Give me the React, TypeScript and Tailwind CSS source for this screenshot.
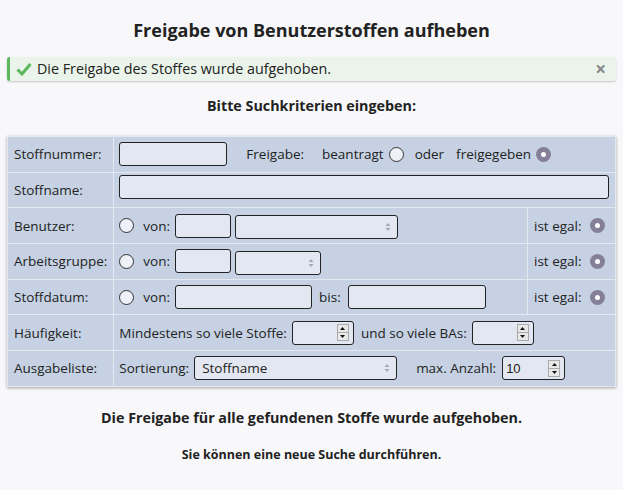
import React from "react";

function Radio({ checked }: { checked?: boolean }) {
  if (checked) {
    return (
      <span className="inline-flex h-[15px] w-[15px] items-center justify-center rounded-full bg-[#857f98]">
        <span className="h-[5px] w-[5px] rounded-full bg-white" />
      </span>
    );
  }
  return <span className="inline-block h-[15px] w-[15px] rounded-full border border-[#333] bg-[#eef1f7]" />;
}

function Box({ w, children }: { w: string; children?: React.ReactNode }) {
  return (
    <span className={`inline-flex h-[24px] items-center rounded-[3px] border border-[#222] bg-[#e3e7f1] px-[7px] ${w}`}>
      {children}
    </span>
  );
}

function SelectBox({ w, value }: { w: string; value?: string }) {
  return (
    <span className={`inline-flex h-[24px] items-center justify-between rounded-[3px] border border-[#222] bg-[#e3e7f1] pl-[7px] pr-[6px] ${w}`}>
      <span>{value}</span>
      <svg width="6" height="10" viewBox="0 0 6 10">
        <path d="M3 1 L5.5 4 H0.5 Z M3 9 L5.5 6 H0.5 Z" fill="#a3a8b3" />
      </svg>
    </span>
  );
}

function NumberBox({ w, value }: { w: string; value?: string }) {
  return (
    <span className={`inline-flex h-[24px] items-center justify-between rounded-[3px] border border-[#222] bg-[#e3e7f1] pl-[3px] pr-[4px] ${w}`}>
      <span className="text-[13px] font-['Liberation_Sans',sans-serif]">{value}</span>
      <span className="flex h-[17px] w-[12px] flex-col border border-[#aaa] bg-[#e8e8e8]">
        <span className="flex flex-1 items-center justify-center border-b border-[#aaa]">
          <svg width="5" height="3" viewBox="0 0 5 3"><path d="M2.5 0 L5 3 H0 Z" fill="#111" /></svg>
        </span>
        <span className="flex flex-1 items-center justify-center">
          <svg width="5" height="3" viewBox="0 0 5 3"><path d="M0 0 H5 L2.5 3 Z" fill="#111" /></svg>
        </span>
      </span>
    </span>
  );
}

const td = "border border-[#e4e9f1] px-[6px] h-[35.7px]";
const mid = "border border-[#e4e9f1] pl-[5px] pr-[6px] h-[35.7px]";

export default function App() {
  return (
    <div className="min-h-[490px] bg-[#f8f8fa] font-['Open_Sans',sans-serif] text-[#222] pt-[18px]">
      <h1 className="text-center text-[18px] font-bold leading-[24px]">Freigabe von Benutzerstoffen aufheben</h1>

      <div className="mx-[7px] mt-[15px] flex h-[24px] items-center rounded-[3px] border-l-[3px] border-[#5cb85c] bg-[#ebf4ea] pl-[6px] pr-[10px] shadow-[0_1px_2px_rgba(0,0,0,0.2)]">
        <svg width="16" height="14" viewBox="0 0 16 14" className="mr-[5px]">
          <path d="M1.5 7.5 L6 12 L14.5 2" stroke="#5cb85c" strokeWidth="3" fill="none" />
        </svg>
        <span className="flex-1 text-[14.3px]">Die Freigabe des Stoffes wurde aufgehoben.</span>
        <span className="text-[19px] font-bold text-[#888] leading-none">×</span>
      </div>

      <p className="mt-[15px] text-center text-[14.3px] font-bold leading-[20px]">Bitte Suchkriterien eingeben:</p>

      <div className="mx-[7px] mt-[20px] shadow-[0_1px_3px_rgba(0,0,0,0.35)]">
        <table className="w-full border-collapse bg-[#c6d2e3] text-[13.5px]">
          <tbody>
            <tr>
              <td className={`${td} w-[104px]`}>Stoffnummer:</td>
              <td className={mid} colSpan={2}>
                <div className="flex items-center">
                  <Box w="w-[108px]" />
                  <span className="ml-[19px]">Freigabe:</span>
                  <span className="ml-[18px]">beantragt</span>
                  <span className="ml-[5px] flex"><Radio /></span>
                  <span className="ml-[11px]">oder</span>
                  <span className="ml-[12px]">freigegeben</span>
                  <span className="ml-[5px] flex"><Radio checked /></span>
                </div>
              </td>
            </tr>
            <tr>
              <td className={td}>Stoffname:</td>
              <td className={mid} colSpan={2}>
                <Box w="w-full" />
              </td>
            </tr>
            <tr>
              <td className={td}>Benutzer:</td>
              <td className={mid}>
                <div className="flex items-center">
                  <Radio />
                  <span className="ml-[9px] mr-[5px]">von:</span>
                  <Box w="w-[56px]" />
                  <span className="ml-[4px]"><SelectBox w="w-[163px]" /></span>
                </div>
              </td>
              <td className={`${td} w-[88px]`}>
                <div className="flex items-center">
                  <span>ist egal:</span>
                  <span className="ml-[8px] flex"><Radio checked /></span>
                </div>
              </td>
            </tr>
            <tr>
              <td className={td}>Arbeitsgruppe:</td>
              <td className={mid}>
                <div className="flex items-center">
                  <Radio />
                  <span className="ml-[9px] mr-[5px]">von:</span>
                  <Box w="w-[56px]" />
                  <span className="ml-[4px]"><SelectBox w="w-[86px]" /></span>
                </div>
              </td>
              <td className={td}>
                <div className="flex items-center">
                  <span>ist egal:</span>
                  <span className="ml-[8px] flex"><Radio checked /></span>
                </div>
              </td>
            </tr>
            <tr>
              <td className={td}>Stoffdatum:</td>
              <td className={mid}>
                <div className="flex items-center">
                  <Radio />
                  <span className="ml-[9px] mr-[5px]">von:</span>
                  <Box w="w-[137px]" />
                  <span className="ml-[7px] mr-[7px]">bis:</span>
                  <Box w="w-[138px]" />
                </div>
              </td>
              <td className={td}>
                <div className="flex items-center">
                  <span>ist egal:</span>
                  <span className="ml-[8px] flex"><Radio checked /></span>
                </div>
              </td>
            </tr>
            <tr>
              <td className={td}>Häufigkeit:</td>
              <td className={mid} colSpan={2}>
                <div className="flex items-center">
                  <span className="mr-[5px]">Mindestens so viele Stoffe:</span>
                  <NumberBox w="w-[62px]" />
                  <span className="ml-[7px] mr-[5px]">und so viele BAs:</span>
                  <NumberBox w="w-[62px]" />
                </div>
              </td>
            </tr>
            <tr>
              <td className={td}>Ausgabeliste:</td>
              <td className={mid} colSpan={2}>
                <div className="flex items-center">
                  <span className="mr-[5px]">Sortierung:</span>
                  <SelectBox w="w-[203px]" value="Stoffname" />
                  <span className="ml-[19px] mr-[6px]">max. Anzahl:</span>
                  <NumberBox w="w-[63px]" value="10" />
                </div>
              </td>
            </tr>
          </tbody>
        </table>
      </div>

      <p className="mt-[21px] text-center text-[14.3px] font-bold leading-[20px]">Die Freigabe für alle gefundenen Stoffe wurde aufgehoben.</p>
      <p className="mt-[18px] text-center text-[12.5px] font-bold leading-[18px]">Sie können eine neue Suche durchführen.</p>
    </div>
  );
}
